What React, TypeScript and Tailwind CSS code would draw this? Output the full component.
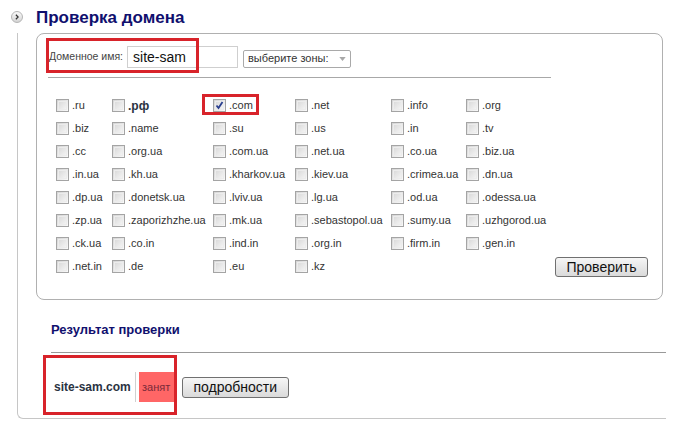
const zones: string[][] = [
  [".ru", ".рф", ".com", ".net", ".info", ".org"],
  [".biz", ".name", ".su", ".us", ".in", ".tv"],
  [".cc", ".org.ua", ".com.ua", ".net.ua", ".co.ua", ".biz.ua"],
  [".in.ua", ".kh.ua", ".kharkov.ua", ".kiev.ua", ".crimea.ua", ".dn.ua"],
  [".dp.ua", ".donetsk.ua", ".lviv.ua", ".lg.ua", ".od.ua", ".odessa.ua"],
  [".zp.ua", ".zaporizhzhe.ua", ".mk.ua", ".sebastopol.ua", ".sumy.ua", ".uzhgorod.ua"],
  [".ck.ua", ".co.in", ".ind.in", ".org.in", ".firm.in", ".gen.in"],
  [".net.in", ".de", ".eu", ".kz"],
];

const Checkbox = ({ checked }: { checked?: boolean }) => (
  <span className="relative inline-block w-[13px] h-[13px] shrink-0 border border-[#a4a4a4] bg-gradient-to-br from-[#d4d4d4] to-[#fafafa]">
    <span className="absolute inset-[1px] border border-[#ececec]" />
    {checked && (
      <svg viewBox="0 0 13 13" className="absolute -left-[1px] -top-[1px] w-[13px] h-[13px]">
        <path d="M3.5 6.5 L5.5 9 L9.5 3" fill="none" stroke="#2a3f8f" strokeWidth="1.8" />
      </svg>
    )}
  </span>
);

const btn =
  "border border-[#707070] rounded-[3px] bg-gradient-to-b from-[#f6f6f6] to-[#dadada] text-[14px] text-[#111] leading-none";

export default function App() {
  return (
    <div className="w-[684px] h-[426px] bg-white font-['Liberation_Sans',Arial,sans-serif] text-[11px] text-[#333]">
      {/* header */}
      <div className="flex items-start h-[28px] pt-[7px]">
        <span className="ml-[11px] mt-[4px] w-[12px] h-[12px] rounded-full border border-[#b5b5b5] bg-gradient-to-b from-[#fafafa] to-[#d4d4d4] flex items-center justify-center">
          <svg viewBox="0 0 8 8" className="w-[6px] h-[6px]">
            <path d="M2.5 1 L5.5 4 L2.5 7" fill="none" stroke="#333" strokeWidth="1.6" />
          </svg>
        </span>
        <h1 className="ml-[13px] text-[17px] leading-[22px] font-bold text-[#10106e]">Проверка домена</h1>
      </div>

      <div className="ml-[17px] w-[649px] h-[386px] border-l border-b border-[#c6c6c6] rounded-bl-[6px]">
        {/* check box */}
        <div className="relative mt-[5px] ml-[18px] w-[627px] h-[267px] border border-[#b0b0b0] rounded-[8px]">
          <div className="absolute left-[9px] top-[4px] w-[153px] h-[35px] border-[3px] border-[#d8232a]" />
          <div className="flex items-center pt-[12px] pl-[12px] h-[34px]">
            <span className="text-[10.5px] text-[#444]">Доменное имя:</span>
            <div className="ml-[4px] w-[111px] h-[22px] border border-[#cfcfcf] flex items-center pl-[5px] text-[14px] text-[#111]">
              site-sam
            </div>
            <div className="ml-[5px] mt-[3px] w-[108px] h-[18px] border border-[#a9a9a9] rounded-[2px] flex items-center pl-[4px] text-[11px] text-[#333]">
              выберите зоны:
              <svg viewBox="0 0 8 5" className="ml-auto mr-[4px] w-[7px] h-[4px]">
                <path d="M0 0 H8 L4 5 Z" fill="#a8a8a8" />
              </svg>
            </div>
          </div>
          <div className="mt-[9px] ml-[11px] w-[503px] border-t border-[#a8a8a8]" />

          <div className="mt-[16px] ml-[19px] w-[592px] grid grid-cols-[56px_101px_82px_96px_75px_1fr] auto-rows-[23px]">
            {zones.map((row, r) =>
              row.map((z, c) => (
                <div key={`${r}-${c}`} className="relative flex items-center gap-[3px]">
                  {z === ".com" && (
                    <div className="absolute -left-[11px] top-[0px] w-[57px] h-[21px] border-[3px] border-[#d8232a]" />
                  )}
                  <Checkbox checked={z === ".com"} />
                  <span className={z === ".рф" ? "font-bold text-[#2a3342] text-[12px]" : "text-[#333]"}>{z}</span>
                </div>
              ))
            )}
            <div className="col-start-6 row-start-8 flex items-center justify-end">
              <button className={`${btn} w-[93px] h-[20px]`}>Проверить</button>
            </div>
          </div>
        </div>

        {/* result */}
        <div className="ml-[33px] mt-[22px] pb-[14px] border-b border-[#999] text-[13px] leading-[16px] font-bold text-[#10106e]">
          Результат проверки
        </div>
        <div className="relative ml-[25px] h-[60px] flex items-center pt-[8px]">
          <div className="absolute left-0 top-[2px] w-[134px] h-[60px] border-[3px] border-[#d8232a]" />
          <span className="ml-[11px] font-bold text-[#2a3342] text-[12px]">site-sam.com</span>
          <span className="ml-[4px] w-px h-[30px] bg-[#d0d0d0]" />
          <span className="ml-[3px] w-[35px] h-[30px] bg-[#ff6666] text-[#7a2a3a] flex items-center justify-center text-[11px]">
            занят
          </span>
          <button className={`${btn} ml-[8px] w-[107px] h-[21px]`}>подробности</button>
        </div>
      </div>
    </div>
  );
}
